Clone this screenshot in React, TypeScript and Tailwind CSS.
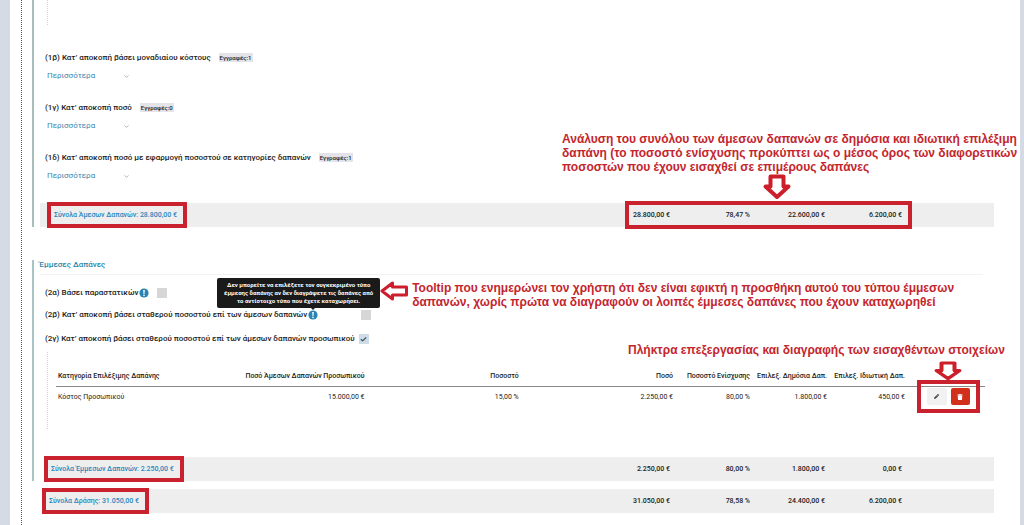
import React from "react";
import { Check, ChevronDown } from "lucide-react";
import { FaPencilAlt, FaTrash } from "react-icons/fa";

type Totals = [string, string, string, string];

const groups = [
  {
    title: "(1β) Κατ’ αποκοπή βάσει μοναδιαίου κόστους",
    count: 1,
  },
  {
    title: "(1γ) Κατ’ αποκοπή ποσό",
    count: 0,
  },
  {
    title: "(1δ) Κατ’ αποκοπή ποσό με εφαρμογή ποσοστού σε κατηγορίες δαπανών",
    count: 1,
  },
];

const headers = [
  "Κατηγορία Επιλέξιμης Δαπάνης",
  "Ποσό Άμεσων Δαπανών Προσωπικού",
  "Ποσοστό",
  "Ποσό",
  "Ποσοστό Ενίσχυσης",
  "Επιλεξ. Δημόσια Δαπ.",
  "Επιλεξ. Ιδιωτική Δαπ.",
];

const row = [
  "Κόστος Προσωπικού",
  "15.000,00 €",
  "15,00 %",
  "2.250,00 €",
  "80,00 %",
  "1.800,00 €",
  "450,00 €",
];

const noteText =
  "font-['Liberation_Sans',sans-serif] text-[12px] leading-[14px] font-bold text-[#c4262e] whitespace-nowrap";

const Arrow = ({ className }: { className: string }) => (
  <svg viewBox="0 0 30 26" preserveAspectRatio="none" className={className} aria-hidden="true">
    <path
      d="M8.5 2.5h13v10h5L15 23 3.500 12.500h5z"
      fill="white"
      stroke="#cc1f2b"
      strokeWidth="4"
      strokeLinejoin="round"
    />
  </svg>
);

const LeftArrow = ({ className }: { className: string }) => (
  <svg viewBox="0 0 28 20" className={className} aria-hidden="true">
    <path
      d="M2 10 12.500 2v4h14v8h-14v4z"
      fill="white"
      stroke="#cc1f2b"
      strokeWidth="3"
      strokeLinejoin="round"
    />
  </svg>
);

const InfoIcon = () => (
  <svg viewBox="0 0 10 10" className="size-[10px]" aria-hidden="true">
    <circle cx="5" cy="5" r="4.600" fill="#2a83b5" />
    <path d="M4.200 1.900h1.600L5.500 5.900h-1z" fill="white" />
    <circle cx="5" cy="7.400" r="0.800" fill="white" />
  </svg>
);

const TotalsBar = ({
  label,
  values,
  framed,
  className = "",
  children,
}: {
  label: string;
  values: Totals;
  framed?: boolean;
  className?: string;
  children?: React.ReactNode;
}) => (
  <div
    className={`flex h-6 items-center justify-between bg-[#eeeeee] text-[7px] font-medium ${className}`}
  >
    <div className="flex h-[26px] items-center border-4 border-[#c9212d] pr-[6px] pl-[3px] text-[#2a86bd]">
      {label}
    </div>
    <div
      className={`relative mr-[82px] grid h-7 grid-cols-[41px_80px_75px_77px] items-center border-4 pr-[6px] text-right text-[#222] ${
        framed ? "border-[#c9212d]" : "border-transparent"
      }`}
    >
      {values.map((value) => (
        <span key={value} className="whitespace-nowrap">
          {value}
        </span>
      ))}
      {children}
    </div>
  </div>
);

const CheckBox = ({ id, checked }: { id: string; checked?: boolean }) => (
  <span className="relative flex size-[10px]">
    <input
      id={id}
      type="checkbox"
      defaultChecked={checked}
      className="peer size-[10px] appearance-none bg-[#d6d6d6] checked:bg-[#cddce6]"
    />
    <Check
      strokeWidth={4}
      className="pointer-events-none absolute inset-0 m-auto hidden size-[7px] text-[#3c5060] peer-checked:block"
    />
  </span>
);

const App = () => {
  return (
    <div className="flex min-h-screen bg-[#d5dbe5] pr-1 pl-[10px] font-[Roboto,sans-serif] text-[8px] leading-[10px] text-[#222]">
      <main className="flex flex-1 bg-white pl-[11px]">
        <div className="flex-1 border-l border-dotted border-[#555] pr-[26px] pl-[10px]">
          <section className="border-l-2 border-[#a9bdbd] pl-[6px]">
            <div className="ml-[7px] h-[25px] border-l border-dotted border-[#ccd6da]"></div>
            <div className="mt-[23px] ml-[5px] flex flex-col gap-[13px]">
              {groups.map((item) => (
                <div key={item.title}>
                  <div className="flex h-[19px] items-center gap-2">
                    <h3 className="font-medium">{item.title}</h3>
                    <span className="bg-[#e3e3e9] px-px text-[6px] leading-[9px] font-medium">
                      Εγγραφές:{item.count}
                    </span>
                  </div>
                  <button className="flex h-[18px] w-[85px] items-center justify-between pl-[2px] text-[#3f87ad]">
                    Περισσότερα
                    <ChevronDown className="size-[7px] text-[#6a8a9c]" />
                  </button>
                </div>
              ))}
            </div>
            <TotalsBar
              label="Σύνολα Άμεσων Δαπανών: 28.800,00 €"
              values={["28.800,00 €", "78,47 %", "22.600,00 €", "6.200,00 €"]}
              framed
              className="mt-[18px] pl-[7px]"
            >
              <div className="absolute right-[-94px] bottom-[25px] w-[440px] text-left">
                <p className={noteText}>
                  Ανάλυση του συνόλου των άμεσων δαπανών σε δημόσια και ιδιωτική επιλέξιμη
                  <br />
                  δαπάνη (το ποσοστό ενίσχυσης προκύπτει ως ο μέσος όρος των διαφορετικών
                  <br />
                  ποσοστών που έχουν εισαχθεί σε επιμέρους δαπάνες
                </p>
                <Arrow className="ml-[200px] h-[26px] w-[30px]" />
              </div>
            </TotalsBar>
          </section>

          <section className="mt-[33px] border-l-2 border-[#a9c4c4] pl-[5px]">
            <h2 className="mr-[11px] h-[15px] border-b border-[#f3f3f3] font-medium text-[#2a86a8]">
              Έμμεσες Δαπάνες
            </h2>
            <div className="ml-[6px] flex flex-col pt-[7px] font-medium">
              <div className="flex h-[22px] items-center">
                <label htmlFor="cost-a">(2α) Βάσει παραστατικών</label>
                <button aria-label="Πληροφορίες" className="mr-2 ml-px">
                  <InfoIcon />
                </button>
                <CheckBox id="cost-a" />
              </div>
              <div className="flex h-[22px] items-center">
                <label htmlFor="cost-b">
                  (2β) Κατ’ αποκοπή βάσει σταθερού ποσοστού επί των άμεσων δαπανών
                </label>
                <div className="relative mr-[43px] ml-px">
                  <button aria-label="Πληροφορίες" className="block">
                    <InfoIcon />
                  </button>
                  <div
                    role="tooltip"
                    className="absolute right-[-62px] bottom-[12px] z-10 w-[163px] rounded-xs bg-[#1a1a1a] py-[3px] text-center text-[6px] leading-[8px] font-bold whitespace-nowrap text-white"
                  >
                    Δεν μπορείτε να επιλέξετε τον συγκεκριμένο τύπο
                    <br />
                    έμμεσης δαπάνης αν δεν διαγράψετε τις δαπάνες από
                    <br />
                    το αντίστοιχο τύπο που έχετε καταχωρήσει.
                    <span className="absolute top-full right-[65px] border-x-2 border-t-2 border-x-transparent border-t-[#1a1a1a]"></span>
                    <div className="absolute top-[3px] left-full flex gap-1 text-left">
                      <LeftArrow className="h-5 w-7" />
                      <p className={noteText}>
                        Tooltip που ενημερώνει τον χρήστη ότι δεν είναι εφικτή η προσθήκη αυτού του τύπου έμμεσων
                        <br />
                        δαπανών, χωρίς πρώτα να διαγραφούν οι λοιπές έμμεσες δαπάνες που έχουν καταχωρηθεί
                      </p>
                    </div>
                  </div>
                </div>
                <CheckBox id="cost-b" />
              </div>
              <div className="flex h-[26px] items-center gap-1">
                <label htmlFor="cost-c">
                  (2γ) Κατ’ αποκοπή βάσει σταθερού ποσοστού επί των άμεσων δαπανών προσωπικού
                </label>
                <CheckBox id="cost-c" checked />
              </div>
            </div>

            <div className="mr-[9px] ml-2 h-[77px] border-l border-dotted border-[#ccd6da] pt-[14px] pl-2 text-[7px]">
              <table className="w-full table-fixed border-collapse">
                <colgroup>
                  <col />
                  <col />
                  <col />
                  <col />
                  <col className="w-[77px]" />
                  <col className="w-[77px]" />
                  <col className="w-[78px]" />
                  <col className="w-20" />
                </colgroup>
                <thead>
                  <tr className="h-5 border-b border-[#888]">
                    {headers.map((item) => (
                      <th
                        key={item}
                        className="p-0 text-right font-medium whitespace-nowrap first:pl-[2px] first:text-left"
                      >
                        {item}
                      </th>
                    ))}
                    <td></td>
                  </tr>
                </thead>
                <tbody>
                  <tr className="h-[21px]">
                    {row.map((item) => (
                      <td key={item} className="p-0 text-right first:pl-[2px] first:text-left">
                        {item}
                      </td>
                    ))}
                    <td className="p-0">
                      <div className="relative ml-[22px] flex w-[43px] gap-1">
                        <button
                          aria-label="Επεξεργασία"
                          className="flex h-[17px] flex-1 items-center justify-center rounded-xs bg-[#f1f1f1]"
                        >
                          <FaPencilAlt className="size-[5px] text-[#333]" />
                        </button>
                        <button
                          aria-label="Διαγραφή"
                          className="flex h-[17px] flex-1 items-center justify-center rounded-xs bg-[#d1301a]"
                        >
                          <FaTrash className="size-[6px] text-white" />
                        </button>
                        <div className="pointer-events-none absolute -inset-x-[10px] -inset-y-2 border-4 border-[#c9212d]"></div>
                        <div className="absolute -right-7 bottom-6 w-[370px]">
                          <p className={noteText}>
                            Πλήκτρα επεξεργασίας και διαγραφής των εισαχθέντων στοιχείων
                          </p>
                          <Arrow className="mt-1 ml-[305px] h-5 w-[30px]" />
                        </div>
                      </div>
                    </td>
                  </tr>
                </tbody>
              </table>
            </div>

            <TotalsBar
              label="Σύνολα Έμμεσων Δαπανών: 2.250,00 €"
              values={["2.250,00 €", "80,00 %", "1.800,00 €", "0,00 €"]}
              className="mt-[28px] ml-[5px]"
            />
          </section>

          <TotalsBar
            label="Σύνολα Δράσης: 31.050,00 €"
            values={["31.050,00 €", "78,58 %", "24.400,00 €", "6.200,00 €"]}
            className="mt-2 ml-[10px]"
          />
        </div>
      </main>
    </div>
  );
};

export default App;
